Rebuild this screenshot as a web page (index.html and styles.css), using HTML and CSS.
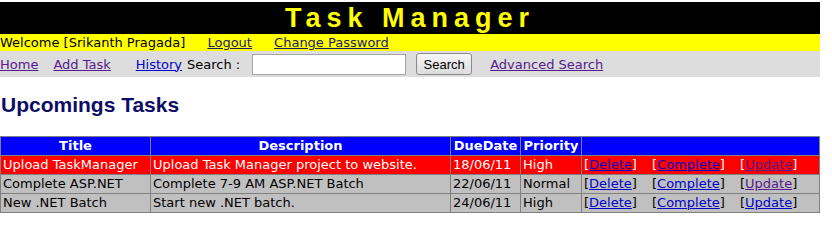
FILE: index.html
```html
<!DOCTYPE html>
<html lang="en">
<head>
  <meta charset="UTF-8" />
  <title>Task Manager</title>
  <link rel="stylesheet" href="styles.css">
</head>
<body>
  <div class="page">
    <div class="banner">Task Manager</div>

    <div class="userbar">
      <span>Welcome [Srikanth Pragada]</span>
      <a href="#" class="user-link">Logout</a>
      <a href="#" class="user-link">Change Password</a>
    </div>

    <div class="menubar">
      <a href="#" class="visited">Home</a>
      <a href="#" class="visited menu-add">Add Task</a>
      <a href="#" class="menu-history">History</a>
      <span class="search-label">Search :</span>
      <input type="text" class="search-box">
      <button class="search-btn">Search</button>
      <a href="#" class="visited menu-adv">Advanced Search</a>
    </div>

    <h2 class="heading">Upcomings Tasks</h2>

    <table class="tasks">
      <tr>
        <th class="col-title">Title</th>
        <th class="col-desc">Description</th>
        <th class="col-due">DueDate</th>
        <th class="col-pri">Priority</th>
        <th></th>
      </tr>
      <tr class="overdue">
        <td>Upload TaskManager</td>
        <td>Upload Task Manager project to website.</td>
        <td>18/06/11</td>
        <td>High</td>
        <td class="actions">[<a href="#">Delete</a>] <span>[<a href="#">Complete</a>]</span> <span>[<a href="#" class="visited">Update</a>]</span></td>
      </tr>
      <tr>
        <td>Complete ASP.NET</td>
        <td>Complete 7-9 AM ASP.NET Batch</td>
        <td>22/06/11</td>
        <td>Normal</td>
        <td class="actions">[<a href="#">Delete</a>] <span>[<a href="#">Complete</a>]</span> <span>[<a href="#" class="visited">Update</a>]</span></td>
      </tr>
      <tr>
        <td>New .NET Batch</td>
        <td>Start new .NET batch.</td>
        <td>24/06/11</td>
        <td>High</td>
        <td class="actions">[<a href="#">Delete</a>] <span>[<a href="#">Complete</a>]</span> <span>[<a href="#">Update</a>]</span></td>
      </tr>
    </table>
  </div>
</body>
</html>
```

FILE: styles.css
```css
body {
  margin: 0;
  font-family: 'DejaVu Sans', Verdana, sans-serif;
  font-size: 13px;
  color: #000;
  background: #fff;
}

.page {
  width: 820px;
  padding-top: 2px;
}

a {
  color: #0000cc;
}

a.visited {
  color: #551a8b;
}

.banner {
  background: #000;
  color: #ffff00;
  font-family: 'Liberation Sans', Arial, sans-serif;
  font-weight: bold;
  font-size: 27px;
  letter-spacing: 6px;
  text-align: center;
  height: 32px;
  line-height: 32px;
}

.userbar {
  background: #ffff00;
  height: 17px;
  line-height: 17px;
}

.user-link {
  color: #1a1a70;
  margin-left: 18px;
}

.menubar {
  background: #dddddd;
  height: 26px;
  display: flex;
  align-items: center;
}

.menu-add {
  margin-left: 15px;
}

.menu-history {
  margin-left: 25px;
}

.search-label {
  margin-left: 5px;
}

.search-box {
  margin: 0 0 0 12px;
  width: 154px;
  height: 21px;
  box-sizing: border-box;
  border: 1px solid #a5a5a5;
  background: #fff;
}

.search-btn {
  margin-left: 10px;
  width: 56px;
  height: 22px;
  font-family: 'Liberation Sans', Arial, sans-serif;
  font-size: 13px;
  border: 1px solid #8a8a8a;
  border-radius: 3px;
  background: linear-gradient(#f6f6f6, #dcdcdc);
  padding: 0;
}

.menu-adv {
  margin-left: 18px;
}

.heading {
  margin: 0;
  padding: 16px 0 0 1px;
  height: 42px;
  box-sizing: border-box;
  font-family: 'Liberation Sans', Arial, sans-serif;
  font-size: 21px;
  color: #0d0d66;
}

.tasks {
  margin-top: 17px;
  width: 820px;
  border-collapse: collapse;
  background: #c0c0c0;
}

.tasks th,
.tasks td {
  border: 1px solid #808080;
  padding: 1px 2px;
  height: 16px;
  line-height: 16px;
  white-space: nowrap;
}

.tasks th {
  background: #0000ff;
  color: #fff;
}

.col-title { width: 145px; }
.col-desc { width: 295px; }
.col-due { width: 65px; }
.col-pri { width: 56px; }

.tasks tr.overdue td {
  background: #ff0000;
  color: #fff;
}

.actions span {
  margin-left: 11px;
}
```
